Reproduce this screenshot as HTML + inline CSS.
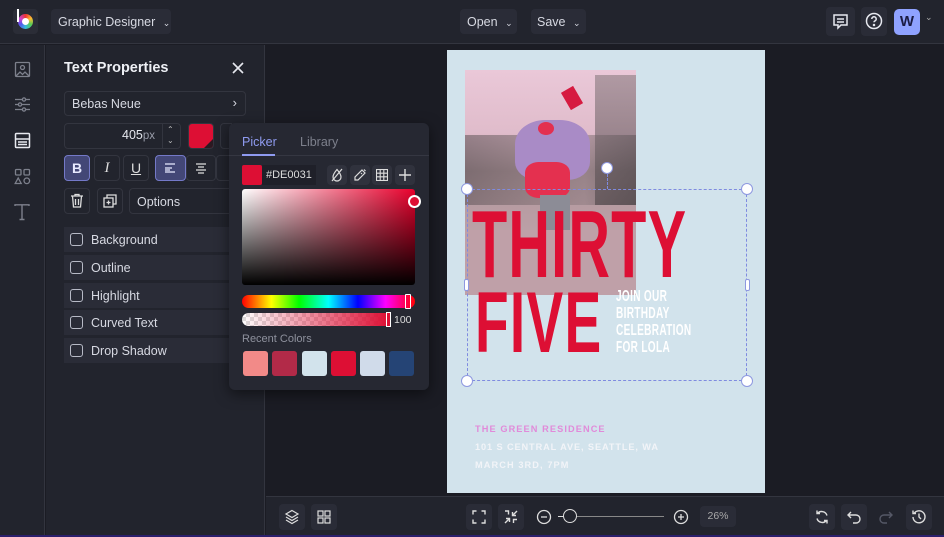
<!DOCTYPE html>
<html><head><meta charset="utf-8"><style>
*{box-sizing:border-box;margin:0;padding:0}
body{width:944px;height:537px;overflow:hidden;background:#1b1c24;font-family:"Liberation Sans",sans-serif;color:#d7d9e2;position:relative}
.a{position:absolute}
.btn{position:absolute;background:#2a2c37;border-radius:4px}
svg{display:block}
.row{position:absolute;left:64px;width:170px;height:25px;background:#2a2c37;font-size:12.5px;color:#d7d9e2;display:flex;align-items:center}
.row i{width:13px;height:13px;border:1.5px solid #b7bac6;border-radius:3px;margin:0 8px 0 6px;display:block}
.pt{font-family:"Liberation Sans",sans-serif;font-weight:bold;color:#f2f4f8;letter-spacing:1.1px;font-size:9.2px}
</style></head><body>
<!-- top bar -->
<div class="a" style="left:0;top:0;width:944px;height:44px;background:#22242d;border-bottom:1px solid #33353f"></div>
<div class="btn" style="left:13px;top:9px;width:25px;height:25px;background:#2b2d37"></div>
<div class="a" style="left:18px;top:14px;width:15px;height:15px;border-radius:50%;background:conic-gradient(#e33,#fb3,#5c5,#3bd,#55e,#c4c,#e33)"></div>
<div class="a" style="left:22px;top:18px;width:7px;height:7px;border-radius:50%;background:#fff"></div>
<div class="a" style="left:17px;top:9px;width:2px;height:13px;background:#fff"></div>
<div class="btn" style="left:51px;top:9px;width:120px;height:25px;font-size:12.5px;padding:6px 0 0 7px">Graphic Designer <span style="font-size:9px;margin-left:4px">⌄</span></div>
<div class="btn" style="left:460px;top:9px;width:57px;height:25px;font-size:12.5px;padding:6px 0 0 7px">Open <span style="font-size:9px;margin-left:4px">⌄</span></div>
<div class="btn" style="left:531px;top:9px;width:55px;height:25px;font-size:12.5px;padding:6px 0 0 6px">Save <span style="font-size:9px;margin-left:4px">⌄</span></div>
<div class="btn" style="left:826px;top:7px;width:29px;height:29px"></div>
<svg class="a" style="left:832px;top:13px" width="17" height="17" viewBox="0 0 17 17" fill="none" stroke="#e6e8ef" stroke-width="1.5"><path d="M2 2h13v10H9l-3 3v-3H2z"/><path d="M5 6h7M5 9h7"/></svg>
<div class="btn" style="left:861px;top:7px;width:26px;height:29px"></div>
<svg class="a" style="left:865px;top:12px" width="18" height="18" viewBox="0 0 18 18" fill="none" stroke="#e6e8ef" stroke-width="1.5"><circle cx="9" cy="9" r="7.5"/><path d="M6.8 7a2.2 2.2 0 1 1 3 2c-.6.3-.8.7-.8 1.3"/><circle cx="9" cy="13" r=".5" fill="#e6e8ef"/></svg>
<div class="a" style="left:894px;top:9px;width:26px;height:26px;border-radius:5px;background:#8fa2ff;color:#1b1c44;font-weight:bold;font-size:15px;text-align:center;line-height:26px">W</div>
<div class="a" style="left:925px;top:12px;font-size:9px;color:#aaa">⌄</div>

<!-- left rail -->
<div class="a" style="left:0;top:45px;width:45px;height:492px;background:#22242d;border-right:1px solid #33353f"></div>
<svg class="a" style="left:14px;top:61px" width="17" height="17" viewBox="0 0 17 17" fill="none" stroke="#7d808c" stroke-width="1.3"><rect x="1.5" y="1.5" width="14" height="14" rx="1"/><circle cx="8.5" cy="6.5" r="2"/><path d="M2 15l4-4 2.5 2.5L11 11l4 4"/></svg>
<svg class="a" style="left:14px;top:96px" width="17" height="17" viewBox="0 0 17 17" fill="none" stroke="#7d808c" stroke-width="1.3"><path d="M1 3.5h15M1 8.5h15M1 13.5h15"/><circle cx="10" cy="3.5" r="1.6" fill="#22242d"/><circle cx="6" cy="8.5" r="1.6" fill="#22242d"/><circle cx="10" cy="13.5" r="1.6" fill="#22242d"/></svg>
<svg class="a" style="left:14px;top:132px" width="17" height="17" viewBox="0 0 17 17" fill="none" stroke="#e8eaf0" stroke-width="1.5"><rect x="1.5" y="1.5" width="14" height="14" rx="1"/><path d="M1.5 7h14M4 10h9M4 12.5h9"/></svg>
<svg class="a" style="left:14px;top:168px" width="17" height="17" viewBox="0 0 17 17" fill="none" stroke="#7d808c" stroke-width="1.3"><rect x="1.5" y="1.5" width="5.5" height="5.5" rx="1"/><rect x="10" y="1.5" width="5.5" height="5.5" rx="1"/><path d="M4.2 10l3 5.5h-6z"/><circle cx="12.8" cy="12.8" r="2.8"/></svg>
<svg class="a" style="left:13px;top:203px" width="18" height="18" viewBox="0 0 18 18" fill="none" stroke="#7d808c" stroke-width="1.4"><path d="M2 3V1.8h14V3M9 1.8v15M6.5 16.5h5"/></svg>

<!-- panel -->
<div class="a" style="left:46px;top:45px;width:219px;height:492px;background:#22242d;border-right:1px solid #33353f"></div>
<div class="a" style="left:64px;top:60px;font-size:14.5px;font-weight:bold;color:#eef0f5">Text Properties</div>
<svg class="a" style="left:232px;top:62px" width="12" height="12" viewBox="0 0 12 12" stroke="#e6e8ef" stroke-width="1.6"><path d="M1 1l10 10M11 1L1 11"/></svg>
<div class="a" style="left:64px;top:91px;width:182px;height:25px;border:1px solid #33353f;border-radius:4px;font-size:12.5px;padding:5px 0 0 7px">Bebas Neue<span style="position:absolute;right:8px;top:3px;font-size:13px">›</span></div>
<div class="a" style="left:64px;top:123px;width:117px;height:26px;border:1px solid #33353f;border-radius:4px"></div>
<div class="a" style="left:122px;top:128px;font-size:12.5px;color:#e6e8ef">405<span style="color:#9a9daa;font-size:11.5px">px</span></div>
<div class="a" style="left:162px;top:123px;width:1px;height:26px;background:#33353f"></div>
<div class="a" style="left:167px;top:124px;font-size:8px;color:#bbb;line-height:11px">⌃<br>⌄</div>
<div class="a" style="left:188px;top:123px;width:26px;height:26px;border:1px solid #33353f;border-radius:4px;background:#dd0f34;overflow:hidden"><div style="position:absolute;right:0;bottom:0;width:0;height:0;border-left:9px solid transparent;border-bottom:9px solid #2a1a22"></div></div>
<div class="a" style="left:220px;top:123px;width:12px;height:26px;border:1px solid #33353f;border-radius:4px 0 0 4px"></div>
<div class="a" style="left:64px;top:155px;width:26px;height:26px;border:1px solid #7479c8;border-radius:4px;background:#434776;color:#e8eaff;font-weight:bold;font-size:14px;text-align:center;line-height:24px">B</div>
<div class="a" style="left:94px;top:155px;width:26px;height:26px;border:1px solid #33353f;border-radius:4px;color:#ddd;font-style:italic;font-family:'Liberation Serif',serif;font-size:15px;text-align:center;line-height:24px">I</div>
<div class="a" style="left:123px;top:155px;width:26px;height:26px;border:1px solid #33353f;border-radius:4px;color:#ddd;text-decoration:underline;font-size:14px;text-align:center;line-height:24px">U</div>
<div class="a" style="left:155px;top:155px;width:31px;height:26px;border:1px solid #7479c8;border-radius:4px;background:#434776"></div>
<svg class="a" style="left:164px;top:162px" width="12" height="12" viewBox="0 0 12 12" stroke="#e8eaff" stroke-width="1.3"><path d="M1 2h10M1 6h7M1 10h10M1 8h5"/></svg>
<div class="a" style="left:186px;top:155px;width:30px;height:26px;border:1px solid #33353f;border-radius:4px"></div>
<svg class="a" style="left:195px;top:162px" width="12" height="12" viewBox="0 0 12 12" stroke="#ddd" stroke-width="1.3"><path d="M1 2h10M3 5h6M1 8h10M3 11h6"/></svg>
<div class="a" style="left:216px;top:155px;width:16px;height:26px;border:1px solid #33353f;border-radius:4px 0 0 4px"></div>
<div class="a" style="left:64px;top:188px;width:26px;height:26px;border:1px solid #33353f;border-radius:4px"></div>
<svg class="a" style="left:70px;top:193px" width="14" height="15" viewBox="0 0 14 15" fill="none" stroke="#ddd" stroke-width="1.3"><path d="M1 3h12M5 3V1.5h4V3M2.5 3l1 11h7l1-11M5.5 6v6M8.5 6v6"/></svg>
<div class="a" style="left:97px;top:188px;width:26px;height:26px;border:1px solid #33353f;border-radius:4px"></div>
<svg class="a" style="left:103px;top:194px" width="14" height="14" viewBox="0 0 14 14" fill="none" stroke="#ddd" stroke-width="1.3"><rect x="1" y="4" width="9" height="9"/><path d="M4 4V1h9v9h-3M5.5 6.5v4M3.5 8.5h4"/></svg>
<div class="a" style="left:129px;top:188px;width:105px;height:26px;border:1px solid #33353f;border-radius:4px;font-size:12.5px;padding:6px 0 0 7px">Options</div>
<div class="row" style="top:227px"><i></i>Background</div>
<div class="row" style="top:255px"><i></i>Outline</div>
<div class="row" style="top:283px"><i></i>Highlight</div>
<div class="row" style="top:310px"><i></i>Curved Text</div>
<div class="row" style="top:338px"><i></i>Drop Shadow</div>

<!-- poster -->
<div class="a" style="left:447px;top:50px;width:318px;height:443px;background:#d2e3ec"></div>
<div class="a" style="left:465px;top:70px;width:171px;height:225px;overflow:hidden;background:linear-gradient(180deg,#eac8d8 0%,#e0bccb 28%,#a48d92 45%,#b79ca2 60%,#c7a9b0 100%)">
 <div class="a" style="left:0;top:65px;width:171px;height:70px;background:linear-gradient(90deg,#5d5256 0%,#7d6c70 40%,#8e7b80 70%,#4c4649 100%);opacity:.55"></div>
 <div class="a" style="left:130px;top:5px;width:41px;height:130px;background:linear-gradient(180deg,#8a7b80,#4a4245);opacity:.6"></div>
 <div class="a" style="left:50px;top:50px;width:75px;height:60px;border-radius:40% 40% 30% 30%;background:#a98bc6"></div>
 <div class="a" style="left:73px;top:52px;width:16px;height:13px;border-radius:50%;background:#e33050"></div>
 <div class="a" style="left:60px;top:92px;width:45px;height:36px;border-radius:30%;background:#e4304f"></div>
 <div class="a" style="left:75px;top:125px;width:30px;height:35px;background:#8c8c96"></div>
 <div class="a" style="left:100px;top:18px;width:14px;height:20px;background:#d61a40;transform:rotate(-30deg)"></div>
 <div class="a" style="left:0;top:160px;width:171px;height:65px;background:#bfa0a8"></div>
</div>
<div class="a" style="left:472px;top:197px;font-weight:bold;color:#dd0f34;font-size:96px;line-height:96px;transform:scaleX(.6);transform-origin:0 0;letter-spacing:2px">THIRTY</div>
<div class="a" style="left:475px;top:280px;font-weight:bold;color:#dd0f34;font-size:86px;line-height:86px;transform:scaleX(.64);transform-origin:0 0;letter-spacing:2px">FIVE</div>
<div class="a" style="left:616px;top:288px;font-weight:bold;color:#fff;font-size:16px;line-height:17px;transform:scaleX(.63);transform-origin:0 0;letter-spacing:.5px">JOIN OUR<br>BIRTHDAY<br>CELEBRATION<br>FOR LOLA</div>
<div class="a" style="left:467px;top:189px;width:280px;height:192px;border:1.5px dashed #7f8be0"></div>
<div class="a" style="left:607px;top:174px;width:0;height:15px;border-left:1.5px dashed #7f8be0"></div>
<div class="a" style="left:601px;top:162px;width:12px;height:12px;border-radius:50%;background:#fff;border:1.5px solid #8e98e0"></div>
<div class="a" style="left:461px;top:183px;width:12px;height:12px;border-radius:50%;background:#fff;border:1.5px solid #8e98e0"></div>
<div class="a" style="left:741px;top:183px;width:12px;height:12px;border-radius:50%;background:#fff;border:1.5px solid #8e98e0"></div>
<div class="a" style="left:461px;top:375px;width:12px;height:12px;border-radius:50%;background:#fff;border:1.5px solid #8e98e0"></div>
<div class="a" style="left:741px;top:375px;width:12px;height:12px;border-radius:50%;background:#fff;border:1.5px solid #8e98e0"></div>
<div class="a" style="left:464px;top:279px;width:5px;height:12px;background:#fff;border:1px solid #8e98e0;border-radius:2px"></div>
<div class="a" style="left:745px;top:279px;width:5px;height:12px;background:#fff;border:1px solid #8e98e0;border-radius:2px"></div>
<div class="a pt" style="left:475px;top:424px;color:#e18ad9">THE GREEN RESIDENCE</div>
<div class="a pt" style="left:475px;top:442px;letter-spacing:.9px">101 S CENTRAL AVE, SEATTLE, WA</div>
<div class="a pt" style="left:475px;top:460px">MARCH 3RD, 7PM</div>

<!-- color popup -->
<div class="a" style="left:229px;top:123px;width:200px;height:267px;background:#262832;border-radius:6px;box-shadow:0 4px 14px rgba(0,0,0,.5)"></div>
<div class="a" style="left:242px;top:135px;font-size:12.5px;color:#8f9bf0">Picker</div>
<div class="a" style="left:300px;top:135px;font-size:12.5px;color:#7d808c">Library</div>
<div class="a" style="left:229px;top:155px;width:200px;height:1px;background:#353742"></div>
<div class="a" style="left:242px;top:154px;width:33px;height:2px;background:#8f9bf0"></div>
<div class="a" style="left:242px;top:165px;width:20px;height:20px;background:#dd0f34;border-radius:2px"></div>
<div class="a" style="left:262px;top:165px;width:54px;height:20px;background:#1f2029;font-size:11px;padding:4px 0 0 4px;color:#ddd">#DE0031</div>
<div class="btn" style="left:327px;top:165px;width:20px;height:20px;background:#30323d"></div>
<svg class="a" style="left:330px;top:168px" width="14" height="14" viewBox="0 0 14 14" fill="none" stroke="#ddd" stroke-width="1.2"><path d="M7 1.5C4 5 3 7 3 9a4 4 0 0 0 8 0c0-2-1-4-4-7.5zM2 13L12 1"/></svg>
<div class="btn" style="left:350px;top:165px;width:20px;height:20px;background:#30323d"></div>
<svg class="a" style="left:353px;top:168px" width="14" height="14" viewBox="0 0 14 14" fill="none" stroke="#ddd" stroke-width="1.2"><path d="M9 2l3 3-7 7H2V9zM8 5l1 1M11 1.5l1.5 1.5"/></svg>
<div class="btn" style="left:372px;top:165px;width:20px;height:20px;background:#30323d"></div>
<svg class="a" style="left:376px;top:169px" width="12" height="12" viewBox="0 0 12 12" fill="none" stroke="#ddd" stroke-width="1.1"><rect x=".5" y=".5" width="11" height="11"/><path d="M4.2 .5v11M7.8 .5v11M.5 4.2h11M.5 7.8h11"/></svg>
<div class="btn" style="left:395px;top:165px;width:20px;height:20px;background:#30323d"></div>
<svg class="a" style="left:399px;top:169px" width="12" height="12" viewBox="0 0 12 12" stroke="#ddd" stroke-width="1.4"><path d="M6 0v12M0 6h12"/></svg>
<div class="a" style="left:242px;top:189px;width:173px;height:96px;border-radius:3px;background:linear-gradient(to bottom,transparent,#000),linear-gradient(to right,#fff,#e8002c)"></div>
<div class="a" style="left:408px;top:195px;width:13px;height:13px;border-radius:50%;border:2px solid #fff;background:#dd0f34"></div>
<div class="a" style="left:242px;top:295px;width:173px;height:13px;border-radius:7px;background:linear-gradient(to right,#f00,#ff0 17%,#0f0 33%,#0ff 50%,#00f 67%,#f0f 83%,#f00)"></div>
<div class="a" style="left:405px;top:294px;width:6px;height:15px;border:1.5px solid #fff;border-radius:1px"></div>
<div class="a" style="left:242px;top:313px;width:147px;height:13px;border-radius:7px 0 0 7px;background:linear-gradient(to right,rgba(221,15,52,0),#dd0f34),repeating-conic-gradient(#ddd 0 25%,#fff 0 50%) 0 0/8px 8px"></div>
<div class="a" style="left:386px;top:312px;width:5px;height:15px;border:1.5px solid #fff;background:#dd0f34"></div>
<div class="a" style="left:394px;top:314px;font-size:10.5px;color:#ddd">100</div>
<div class="a" style="left:242px;top:333px;font-size:11px;color:#8e919d">Recent Colors</div>
<div class="a" style="left:243px;top:351px;width:25px;height:25px;border-radius:3px;background:#f28a88"></div>
<div class="a" style="left:272px;top:351px;width:25px;height:25px;border-radius:3px;background:#b22a48"></div>
<div class="a" style="left:302px;top:351px;width:25px;height:25px;border-radius:3px;background:#d2e3ec"></div>
<div class="a" style="left:331px;top:351px;width:25px;height:25px;border-radius:3px;background:#dd0f34"></div>
<div class="a" style="left:360px;top:351px;width:25px;height:25px;border-radius:3px;background:#d0dbea"></div>
<div class="a" style="left:389px;top:351px;width:25px;height:25px;border-radius:3px;background:#254475"></div>

<!-- bottom bar -->
<div class="a" style="left:266px;top:496px;width:678px;height:41px;background:#22242d;border-top:1px solid #33353f"></div>
<div class="a" style="left:0;top:535px;width:944px;height:2px;background:#2b1f6b"></div>
<div class="btn" style="left:279px;top:504px;width:26px;height:26px"></div>
<svg class="a" style="left:284px;top:509px" width="16" height="16" viewBox="0 0 16 16" fill="none" stroke="#ddd" stroke-width="1.2"><path d="M8 1.5l6 3.5-6 3.5-6-3.5z"/><path d="M2 8l6 3.5L14 8M2 11l6 3.5 6-3.5"/></svg>
<div class="btn" style="left:311px;top:504px;width:26px;height:26px"></div>
<svg class="a" style="left:317px;top:510px" width="14" height="14" viewBox="0 0 14 14" fill="none" stroke="#ddd" stroke-width="1.2"><rect x="1" y="1" width="5" height="5"/><rect x="8" y="1" width="5" height="5"/><rect x="1" y="8" width="5" height="5"/><rect x="8" y="8" width="5" height="5"/></svg>
<div class="btn" style="left:466px;top:504px;width:26px;height:26px"></div>
<svg class="a" style="left:472px;top:510px" width="14" height="14" viewBox="0 0 14 14" fill="none" stroke="#ddd" stroke-width="1.4"><path d="M1 4.5V1h3.5M9.5 1H13v3.5M13 9.5V13H9.5M4.5 13H1V9.5"/></svg>
<div class="btn" style="left:498px;top:504px;width:26px;height:26px"></div>
<svg class="a" style="left:504px;top:510px" width="14" height="14" viewBox="0 0 14 14" fill="none" stroke="#ddd" stroke-width="1.4"><path d="M1 1h3.5v3.5M13 1L8.5 5.5M8.5 2v3.5H12M1 13l4.5-4.5M2 8.5h3.5V12M9.5 13V9.5H13"/></svg>
<svg class="a" style="left:536px;top:509px" width="16" height="16" viewBox="0 0 16 16" fill="none" stroke="#ddd" stroke-width="1.3"><circle cx="8" cy="8" r="6.5"/><path d="M5 8h6"/></svg>
<div class="a" style="left:568px;top:516px;width:96px;height:1px;background:#888"></div>
<div class="a" style="left:558px;top:516px;width:6px;height:1px;background:#ddd"></div>
<div class="a" style="left:563px;top:509px;width:14px;height:14px;border-radius:50%;border:1.5px solid #ddd;background:#22242d"></div>
<svg class="a" style="left:673px;top:509px" width="16" height="16" viewBox="0 0 16 16" fill="none" stroke="#ddd" stroke-width="1.3"><circle cx="8" cy="8" r="6.5"/><path d="M5 8h6M8 5v6"/></svg>
<div class="btn" style="left:700px;top:506px;width:36px;height:21px;font-size:10.5px;color:#aaa;text-align:center;line-height:21px">26%</div>
<div class="btn" style="left:809px;top:504px;width:26px;height:26px"></div>
<svg class="a" style="left:814px;top:509px" width="16" height="16" viewBox="0 0 16 16" fill="none" stroke="#ddd" stroke-width="1.4"><path d="M13 6.5A5.5 5.5 0 0 0 3.5 4.5M3 9.5a5.5 5.5 0 0 0 9.5 2M3 1.5v3h3M13 14.5v-3h-3"/></svg>
<div class="btn" style="left:841px;top:504px;width:26px;height:26px"></div>
<svg class="a" style="left:846px;top:509px" width="16" height="16" viewBox="0 0 16 16" fill="none" stroke="#ddd" stroke-width="1.4"><path d="M5 3L2 6l3 3M2 6h8a4 4 0 0 1 0 8H7"/></svg>
<svg class="a" style="left:878px;top:509px" width="16" height="16" viewBox="0 0 16 16" fill="none" stroke="#555866" stroke-width="1.4"><path d="M11 3l3 3-3 3M14 6H6a4 4 0 0 0 0 8h3"/></svg>
<div class="btn" style="left:906px;top:504px;width:26px;height:26px"></div>
<svg class="a" style="left:911px;top:509px" width="16" height="16" viewBox="0 0 16 16" fill="none" stroke="#ddd" stroke-width="1.4"><path d="M3 4.5A6 6 0 1 1 2 8M2 1.5v3h3M8 4.5V8l2 2"/></svg>
</body></html>
